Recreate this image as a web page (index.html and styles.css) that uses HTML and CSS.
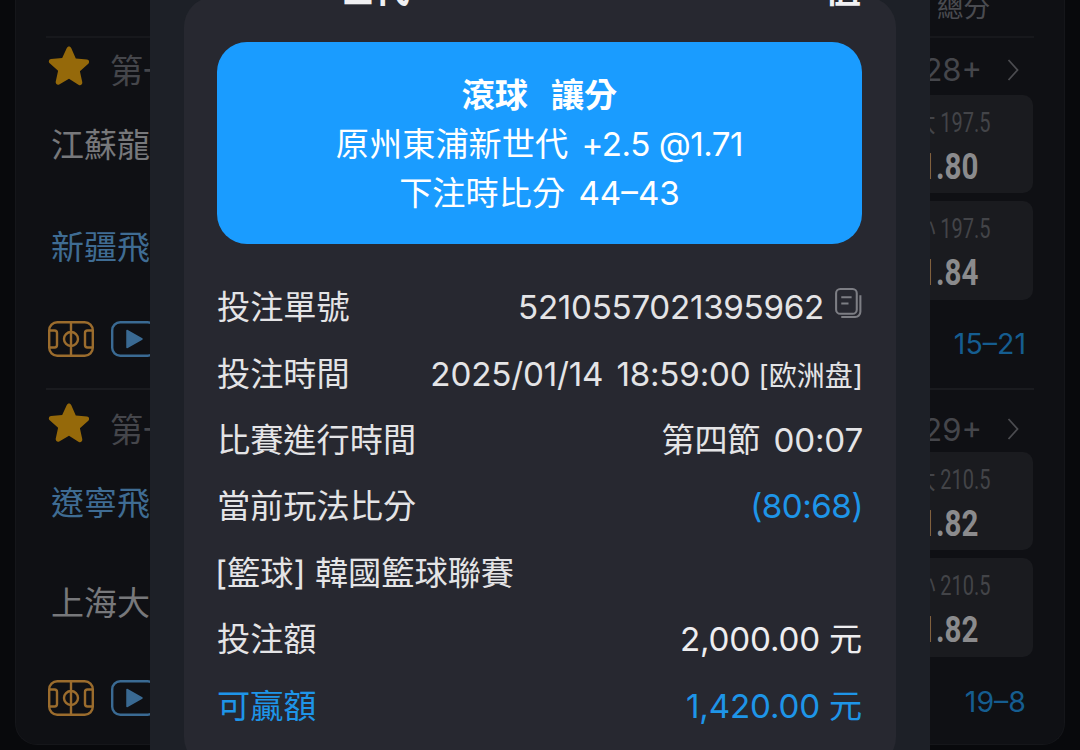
FILE: index.html
```html
<!DOCTYPE html>
<html lang="zh-Hant">
<head>
<meta charset="utf-8">
<title>注單詳情</title>
<link rel="stylesheet" href="styles.css">
</head>
<body>
<div class="stage">
  <svg class="defs" width="0" height="0" aria-hidden="true">
    <symbol id="pitch" viewBox="0 0 46 36">
      <rect x="1.2" y="1.2" width="43.6" height="33.6" rx="8" fill="none" stroke="currentColor" stroke-width="2.4"/>
      <path d="M23 1v34M1 9.5h5.5a2.5 2.5 0 0 1 2.5 2.5v12a2.5 2.5 0 0 1-2.5 2.5H1M45 9.5h-5.5a2.5 2.5 0 0 0-2.5 2.5v12a2.5 2.5 0 0 0 2.5 2.5H45" fill="none" stroke="currentColor" stroke-width="2.4"/>
      <circle cx="23" cy="18" r="7" fill="none" stroke="currentColor" stroke-width="2.4"/>
    </symbol>
    <symbol id="play" viewBox="0 0 46 36">
      <rect x="1.2" y="1.2" width="43.6" height="33.6" rx="8" fill="none" stroke="currentColor" stroke-width="2.4"/>
      <path d="M16 9.5 31 18 16 26.5Z" fill="currentColor" stroke="currentColor" stroke-width="1.5" stroke-linejoin="round"/>
    </symbol>
    <symbol id="star" viewBox="0 0 42 42">
      <path d="M21 2.5c1 0 1.8.6 2.2 1.5l4.6 10.4 11.2 1.2c2.1.2 2.9 2.8 1.3 4.2l-8.4 7.5 2.4 11c.4 2-1.7 3.6-3.5 2.6L21 34.8l-9.8 5.6c-1.8 1-3.9-.6-3.5-2.6l2.4-11-8.4-7.5c-1.6-1.4-.8-4 1.3-4.2l11.2-1.2L18.800 4c.4-.9 1.200-1.500 2.200-1.500Z" fill="currentColor"/>
    </symbol>
  </svg>

  <main class="matches">
    <div class="top-head"><span>總分</span></div>

    <section class="match">
      <div class="match-head">
        <svg class="star"><use href="#star"/></svg>
        <span class="period">第一節</span>
        <span class="more">+128+</span>
        <svg class="chev" viewBox="0 0 12 24"><path d="M1.500 2 10.500 12 1.500 22" fill="none" stroke="currentColor" stroke-width="1.800"/></svg>
      </div>
      <div class="match-body">
        <div class="teams">
          <div class="team">江蘇龍</div>
          <div class="team team-blue">新疆飛</div>
        </div>
        <div class="odds">
          <div class="odd"><span class="odd-label">大 197.5</span><b class="odd-val">1.80</b></div>
          <div class="odd"><span class="odd-label">小 197.5</span><b class="odd-val">1.84</b></div>
        </div>
      </div>
      <div class="match-foot">
        <svg class="ic ic-orange"><use href="#pitch"/></svg>
        <svg class="ic ic-blue"><use href="#play"/></svg>
        <span class="score">15–21</span>
      </div>
    </section>

    <section class="match match-next">
      <div class="match-head">
        <svg class="star"><use href="#star"/></svg>
        <span class="period">第一節</span>
        <span class="more">+129+</span>
        <svg class="chev" viewBox="0 0 12 24"><path d="M1.500 2 10.500 12 1.500 22" fill="none" stroke="currentColor" stroke-width="1.800"/></svg>
      </div>
      <div class="match-body">
        <div class="teams">
          <div class="team team-blue">遼寧飛</div>
          <div class="team">上海大</div>
        </div>
        <div class="odds">
          <div class="odd"><span class="odd-label">大 210.5</span><b class="odd-val">1.82</b></div>
          <div class="odd"><span class="odd-label">小 210.5</span><b class="odd-val">1.82</b></div>
        </div>
      </div>
      <div class="match-foot">
        <svg class="ic ic-orange"><use href="#pitch"/></svg>
        <svg class="ic ic-blue"><use href="#play"/></svg>
        <span class="score">19–8</span>
      </div>
    </section>
  </main>

  <aside class="sheet">
    <div class="modal">
      <header class="modal-head"><span>世代</span><span>值</span></header>
      <div class="hero">
        <div class="hero-title">滾球 讓分</div>
        <div>原州東浦新世代 <span class="hero-num">+2.5 @1.71</span></div>
        <div>下注時比分 44–43</div>
      </div>
      <div class="rows">
        <div class="row"><span>投注單號</span><span class="val val-id">5210557021395962<svg class="copy" viewBox="0 0 26 30"><path d="M6 28h13.500a5 5 0 0 0 5-5V7" fill="none" stroke="currentColor" stroke-width="2"/><rect x="1" y="1" width="20" height="24" rx="4" fill="none" stroke="currentColor" stroke-width="2"/><path d="M6 9h10M6 15h7" fill="none" stroke="currentColor" stroke-width="2"/></svg></span></div>
        <div class="row"><span>投注時間</span><span class="val">2025/01/14 18:59:00 <small class="tag">[欧洲盘]</small></span></div>
        <div class="row"><span>比賽進行時間</span><span class="val">第四節 00:07</span></div>
        <div class="row"><span>當前玩法比分</span><span class="val val-score blue">(80:68)</span></div>
        <div class="row"><span class="league">[籃球] 韓國籃球聯賽</span></div>
        <div class="row"><span>投注額</span><span class="val strong">2,000.00 元</span></div>
        <div class="row blue"><span>可贏額</span><span class="val strong">1,420.00 元</span></div>
      </div>
    </div>
  </aside>
</div>
</body>
</html>
```
FILE: styles.css
```css
* { box-sizing: border-box; }
html, body { margin: 0; padding: 0; background: #08090c; }
body {
  width: 1080px;
  height: 750px;
  overflow: hidden;
  font-family: Inter, "Noto Sans CJK TC", "Noto Sans", sans-serif;
}
.stage { position: relative; width: 1080px; height: 750px; overflow: hidden; }
.defs { position: absolute; }

/* background list */
.matches {
  width: 1050px;
  height: 745px;
  margin-left: 15px;
  padding: 0 30px;
  background: #0f1014;
  border-radius: 0 0 22px 22px;
  border: 1px solid #15161a;
  border-top: 0;
  display: flex;
  flex-direction: column;
}
.top-head {
  height: 38px;
  border-bottom: 2px solid #17181c;
  display: flex;
  justify-content: flex-end;
  padding-right: 44px;
}
.top-head span {
  font-size: 26.5px;
  line-height: 26px;
  margin-top: -6px;
  color: #4a4b50;
}
.match { height: 350px; display: flex; flex-direction: column; }
.match-next { border-top: 2px solid #1a1b1f; }
.match-head {
  height: 57px;
  display: flex;
  align-items: center;
  padding-top: 4px;
}
.match-next .match-head { height: 62px; padding-top: 14px; }
.star { width: 42px; height: 42px; margin: 0 0 8px 2px; color: #95690a; flex: none; }
.match-next .star { margin-bottom: 12px; }
.period { margin-left: 20px; font-size: 33px; color: #45464b; }
.more { margin: 2px 0 0 auto; font-size: 31px; color: #45464b; }
.chev { width: 12px; height: 24px; margin: 2px 15px 0 25px; color: #4b4c50; }

.match-body { display: flex; justify-content: space-between; }
.teams { display: flex; flex-direction: column; padding-left: 5px; }
.team {
  font-size: 33px;
  line-height: 48px;
  height: 102px;
  padding-top: 26px;
  color: #77787b;
}
.team-blue { color: #3f6c93; }
.match-next .team { height: 100px; padding-top: 27px; }
.match-next .team + .team { height: 101px; }
.odds { display: flex; flex-direction: column; gap: 8px; width: 200px; margin-right: 1px; }
.odd {
  height: 98px;
  background: #1a1b1f;
  border-radius: 10px;
  display: flex;
  flex-direction: column;
  align-items: flex-end;
  padding: 10px 42px 0 0;
  font-family: Roboto, "Noto Sans CJK TC", sans-serif;
}
.odd + .odd { height: 99px; }
.odd-label {
  font-size: 27px;
  line-height: 36px;
  color: #434448;
  white-space: nowrap;
  transform: scaleX(.74);
  transform-origin: right center;
}
.odd-val {
  font-size: 36px;
  line-height: 50px;
  color: #8b8b8d;
  margin: 1px 13px 0 0;
  transform: scaleX(.82);
  transform-origin: right center;
}
.match-foot {
  height: 58px;
  display: flex;
  align-items: center;
  gap: 17px;
  padding: 20px 2px 0;
}
.match-next .match-foot { padding-top: 23px; }
.ic { width: 46px; height: 36px; flex: none; }
.ic-orange { color: #9b6c2d; }
.ic-blue { color: #3a6a93; }
.score { margin: 8px 6px 0 auto; font-size: 28.5px; color: #155d90; }

/* overlay */
.sheet {
  position: absolute;
  left: 150px;
  top: 0;
  width: 780px;
  height: 750px;
  background: #1d2027;
  padding: 0 34px;
}
.modal {
  margin-top: -3px;
  height: 770px;
  background: #272830;
  border-radius: 30px;
  padding: 0 34px 0 33px;
  color: #e4e4e6;
}
.modal-head {
  height: 11px;
  margin-bottom: 34px;
  display: flex;
  justify-content: space-between;
  align-items: flex-end;
  padding: 0 1px 0 121px;
  font-size: 36px;
  font-weight: 700;
  line-height: 36px;
  color: #f0f0f2;
}
.hero {
  height: 202px;
  background: #1a9cff;
  border-radius: 30px;
  padding-top: 29px;
  text-align: center;
  color: #fff;
  font-size: 33.2px;
  line-height: 49px;
  word-spacing: 4px;
}
.hero-title { font-weight: 700; word-spacing: 15px; }
.hero-num { letter-spacing: -.5px; word-spacing: 0; }
.rows { margin: 30.3px -1px 0 0; }
.row {
  height: 66.4px;
  display: flex;
  justify-content: space-between;
  align-items: baseline;
  font-size: 33.2px;
  line-height: 66.4px;
  white-space: nowrap;
}
.league { margin-left: -2px; }
.val { display: flex; align-items: baseline; gap: 10px; word-spacing: 4px; letter-spacing: -.2px; }
.val-id { letter-spacing: -.3px; gap: 8px; }
.val-score { letter-spacing: -.5px; }
.val.strong { letter-spacing: -.2px; word-spacing: 0; margin-right: 1px; color: #eeeef0; }
.row.blue .val.strong { color: inherit; }
.blue { color: #1e95e8; }
.copy { width: 27px; height: 31px; color: #7d7e84; margin: 0 1px 4.5px 3px; }
.tag { font-size: 28px; font-family: Inter, "Noto Sans CJK SC", sans-serif; letter-spacing: 0; margin-left: -2px; }
```
